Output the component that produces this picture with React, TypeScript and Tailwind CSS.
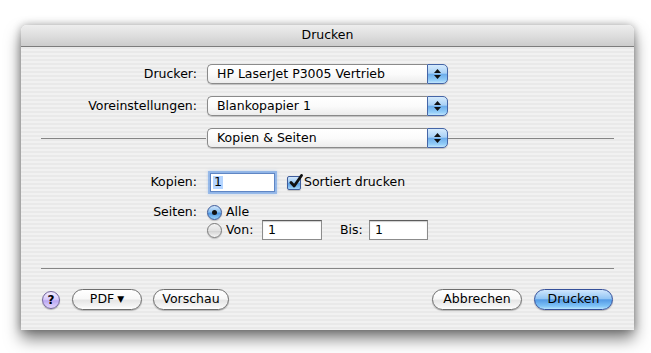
import React from "react";

function Arrows() {
  return (
    <div className="flex flex-col items-center justify-center gap-[2px]">
      <svg width="7" height="4" viewBox="0 0 7 4"><path d="M3.5 0 L7 4 L0 4 Z" fill="#111" /></svg>
      <svg width="7" height="4" viewBox="0 0 7 4"><path d="M0 0 L7 0 L3.5 4 Z" fill="#111" /></svg>
    </div>
  );
}

function Popup({ text, className = "" }: { text: string; className?: string }) {
  return (
    <div className={"flex h-[20px] w-[241px] shadow-[0_1px_1px_rgba(0,0,0,0.18)] rounded-[5px] " + className}>
      <div className="flex-1 flex items-center pl-[9px] rounded-l-[5px] border-y border-l border-[#8a8a8a] bg-[linear-gradient(to_bottom,#ffffff_0%,#fbfbfb_50%,#ececec_100%)] leading-none">
        {text}
      </div>
      <div className="w-[21px] flex items-center justify-center rounded-r-[5px] border border-[#4565a6] bg-[linear-gradient(to_bottom,#d6ebfd_0%,#a9d1f6_45%,#6eaeeb_52%,#93cdf8_85%,#c2e6fd_100%)]">
        <Arrows />
      </div>
    </div>
  );
}

function Button({ children, className = "", primary = false }: { children: React.ReactNode; className?: string; primary?: boolean }) {
  const base = "h-[21px] rounded-full flex items-center justify-center leading-none shadow-[0_1px_1px_rgba(0,0,0,0.25)] ";
  const look = primary
    ? "border border-[#35509a] bg-[linear-gradient(to_bottom,#cfe6fd_0%,#94c6f4_45%,#549be6_52%,#7fc3f7_85%,#b8e4fd_100%)]"
    : "border border-[#6e6e6e] bg-[linear-gradient(to_bottom,#ffffff_0%,#f8f8f8_45%,#e6e6e6_55%,#f4f4f4_85%,#ffffff_100%)]";
  return <div className={base + look + " " + className}>{children}</div>;
}

function Radio({ on }: { on: boolean }) {
  return on ? (
    <div className="w-[15px] h-[15px] rounded-full border border-[#3d5a99] bg-[linear-gradient(to_bottom,#cfe5fb_0%,#8cc0f0_45%,#4f96e2_55%,#9ad2f8_100%)] flex items-center justify-center shadow-[0_1px_1px_rgba(0,0,0,0.2)]">
      <div className="w-[5px] h-[5px] rounded-full bg-[#111]" />
    </div>
  ) : (
    <div className="w-[15px] h-[15px] rounded-full border border-[#7a7a7a] bg-[linear-gradient(to_bottom,#f4f4f4_0%,#e2e2e2_50%,#d2d2d2_55%,#f6f6f6_100%)] shadow-[0_1px_1px_rgba(0,0,0,0.2)]" />
  );
}

function Checkbox() {
  return (
    <div className="relative w-[14px] h-[14px] rounded-[2px] border border-[#3f5d9c] bg-[linear-gradient(to_bottom,#d4e8fc_0%,#98c7f3_45%,#5a9fe6_55%,#a3d6f9_100%)] shadow-[0_1px_1px_rgba(0,0,0,0.2)]">
      <svg className="absolute left-[1px] top-[-3px]" width="14" height="15" viewBox="0 0 14 15">
        <path d="M2 8.5 L5.2 12 L12.5 1.5" fill="none" stroke="#111" strokeWidth="2.8" strokeLinecap="round" strokeLinejoin="round" />
      </svg>
    </div>
  );
}

function Field({ children, className = "" }: { children?: React.ReactNode; className?: string }) {
  return (
    <div className={"h-[20px] bg-white border border-[#8c8c8c] border-t-[#5c5c5c] shadow-[inset_0_1px_1px_rgba(0,0,0,0.2)] flex items-center pl-[5px] leading-none " + className}>
      {children}
    </div>
  );
}

export default function App() {
  return (
    <div className="w-[651px] h-[353px] bg-white pt-[25px] pl-[21px] font-['DejaVu_Sans',sans-serif] text-[12.5px] text-black overflow-hidden">
      <div className="w-[613px] h-[305px] rounded-t-[6px] flex flex-col bg-[repeating-linear-gradient(to_bottom,#f1f1f1_0px,#f1f1f1_2px,#e9e9e9_2px,#e9e9e9_4px)] shadow-[0_9px_16px_rgba(0,0,0,0.5),0_0_9px_rgba(0,0,0,0.3)]">
        {/* title bar */}
        <div className="h-[22px] rounded-t-[6px] border-b border-[#7c7c7c] bg-[linear-gradient(to_bottom,#eeeeee_0%,#dedede_50%,#cccccc_100%)] flex items-center justify-center leading-none">
          Drucken
        </div>

        {/* body */}
        <div className="flex flex-col px-[20px] pt-[17px]">
          <div className="flex items-center h-[20px]">
            <div className="w-[156px] text-right">Drucker:</div>
            <Popup text="HP LaserJet P3005 Vertrieb" className="ml-[10px]" />
          </div>
          <div className="flex items-center h-[20px] mt-[12px]">
            <div className="w-[156px] text-right">Voreinstellungen:</div>
            <Popup text="Blankopapier 1" className="ml-[10px]" />
          </div>
          <div className="flex items-center h-[20px] mt-[12px]">
            <div className="w-[165px] h-px bg-[#858585]" />
            <Popup text="Kopien & Seiten" className="ml-[1px]" />
            <div className="flex-1 h-px bg-[#858585]" />
          </div>

          <div className="flex items-center h-[21px] mt-[24px]">
            <div className="w-[156px] text-right">Kopien:</div>
            <div className="ml-[13px] w-[65px] h-[19px] bg-white border border-[#5f86c4] shadow-[0_0_0_2px_rgba(110,160,230,0.6),0_0_3px_2px_rgba(110,160,230,0.35)] flex items-center pl-[2px] leading-none">
              <span className="bg-[#b5d5ff] px-[1px]">1</span>
            </div>
            <div className="ml-[12px]"><Checkbox /></div>
            <div className="ml-[3px]">Sortiert drucken</div>
          </div>

          <div className="flex mt-[11px]">
            <div className="w-[156px] text-right h-[16px] leading-[16px]">Seiten:</div>
            <div className="ml-[10px] flex flex-col">
              <div className="flex items-center h-[16px]">
                <Radio on />
                <div className="ml-[4px]">Alle</div>
              </div>
              <div className="flex items-center h-[20px]">
                <Radio on={false} />
                <div className="ml-[4px] w-[36px]">Von:</div>
                <Field className="w-[60px]">1</Field>
                <div className="ml-[18px] w-[29px]">Bis:</div>
                <Field className="w-[59px]">1</Field>
              </div>
            </div>
          </div>

          <div className="h-px bg-[#858585] mt-[28px]" />

          <div className="flex items-center h-[21px] mt-[20px]">
            <div className="ml-[1px] w-[18px] h-[18px] rounded-full border border-[#75679d] bg-[linear-gradient(to_bottom,#f2ecff_0%,#d9ccfb_45%,#bba8f2_55%,#e1d6fd_100%)] flex items-center justify-center font-bold text-[12px] leading-none shadow-[0_1px_1px_rgba(0,0,0,0.25)]">
              ?
            </div>
            <Button className="ml-[12px] w-[70px]">PDF <span className="ml-[3px] text-[9px]">▼</span></Button>
            <Button className="ml-[11px] w-[76px]">Vorschau</Button>
            <div className="flex-1" />
            <Button className="w-[90px]">Abbrechen</Button>
            <Button primary className="ml-[12px] mr-[1px] w-[79px]">Drucken</Button>
          </div>
        </div>
      </div>
    </div>
  );
}
